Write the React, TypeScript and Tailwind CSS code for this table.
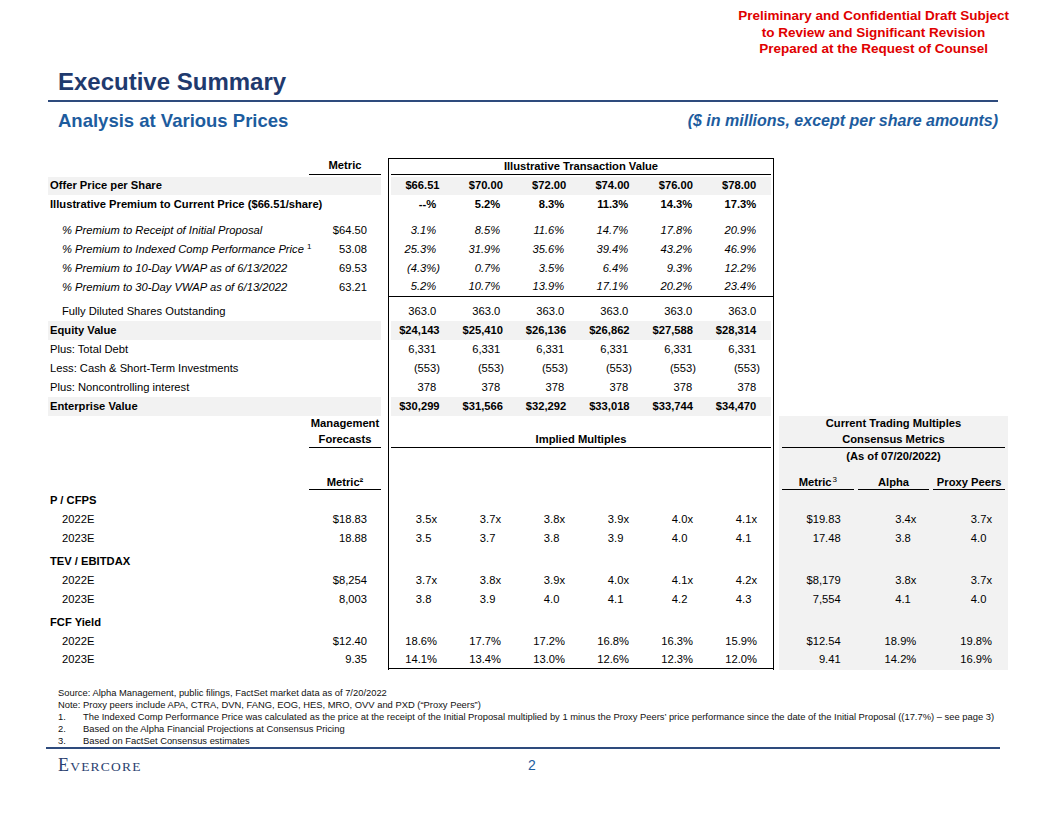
import React from "react";

type ShellProps = {
  h: string;
  band?: boolean;
  label?: React.ReactNode;
  labelCls?: string;
  metric?: React.ReactNode;
  metricCls?: string;
  box?: React.ReactNode;
  boxCls?: string;
  right?: React.ReactNode;
  grey?: boolean;
};

// one horizontal strip of the table: label | metric | boxed values | right panel
function Shell({ h, band, label, labelCls = "", metric, metricCls = "", box, boxCls = "", right, grey }: ShellProps) {
  const bg = band ? "bg-[#f2f2f2]" : "";
  return (
    <div className={`flex ${h}`}>
      <div className={`w-[261px] flex items-center whitespace-nowrap ${bg} ${labelCls}`}>{label}</div>
      <div className={`w-[72px] flex items-center ${bg} ${metricCls}`}>{metric}</div>
      <div className="w-[7px]" />
      <div className={`w-[386px] border-x border-black ${boxCls}`}>{box}</div>
      <div className="w-[5px]" />
      <div className={`w-[229px] px-[3px] ${grey ? "bg-[#f2f2f2]" : ""}`}>{right}</div>
    </div>
  );
}

// upper section values: keep room for a closing paren so "(553)" hangs right
const Paren = ({ v }: { v: string }) => (
  <>
    {v}
    {!v.endsWith(")") && <span className="invisible">)</span>}
  </>
);

// multiples without the "x" still line up with the ones that have it
const Mult = ({ v }: { v: string }) => (
  <>
    {v}
    {/^[0-9.]+$/.test(v) && <span className="invisible">x</span>}
  </>
);

function UpperVals({ vals, band, cls = "" }: { vals: string[]; band?: boolean; cls?: string }) {
  return (
    <div className={`h-full grid grid-cols-6 ${band ? "mx-[2px] bg-[#f2f2f2]" : ""} ${cls}`}>
      {vals.map((v, i) => (
        <div key={i} className={`flex items-center justify-end ${band ? "pr-[11px]" : "pr-[13px]"}`}>
          <Paren v={v} />
        </div>
      ))}
    </div>
  );
}

function LowerVals({ vals }: { vals: string[] }) {
  return (
    <div className="h-full grid grid-cols-6">
      {vals.map((v, i) => (
        <div key={i} className="flex items-center justify-end pr-[16px]">
          <Mult v={v} />
        </div>
      ))}
    </div>
  );
}

function RightVals({ vals }: { vals: string[] }) {
  return (
    <div className="h-full grid grid-cols-3 gap-x-[4px]">
      {vals.map((v, i) => (
        <div key={i} className="flex items-center justify-end pr-[13px]">
          {i === 0 ? v : <Mult v={v} />}
        </div>
      ))}
    </div>
  );
}

const premiums = [
  { label: "% Premium to Receipt of Initial Proposal", sup: false, metric: "$64.50", vals: ["3.1%", "8.5%", "11.6%", "14.7%", "17.8%", "20.9%"] },
  { label: "% Premium to Indexed Comp Performance Price", sup: true, metric: "53.08", vals: ["25.3%", "31.9%", "35.6%", "39.4%", "43.2%", "46.9%"] },
  { label: "% Premium to 10-Day VWAP as of 6/13/2022", sup: false, metric: "69.53", vals: ["(4.3%)", "0.7%", "3.5%", "6.4%", "9.3%", "12.2%"] },
  { label: "% Premium to 30-Day VWAP as of 6/13/2022", sup: false, metric: "63.21", vals: ["5.2%", "10.7%", "13.9%", "17.1%", "20.2%", "23.4%"] },
];

const bridge = [
  { label: "Fully Diluted Shares Outstanding", kind: "indent", vals: Array(6).fill("363.0") },
  { label: "Equity Value", kind: "bold", vals: ["$24,143", "$25,410", "$26,136", "$26,862", "$27,588", "$28,314"] },
  { label: "Plus: Total Debt", kind: "plain", vals: Array(6).fill("6,331") },
  { label: "Less: Cash & Short-Term Investments", kind: "plain", vals: Array(6).fill("(553)") },
  { label: "Plus: Noncontrolling interest", kind: "plain", vals: Array(6).fill("378") },
  { label: "Enterprise Value", kind: "bold", vals: ["$30,299", "$31,566", "$32,292", "$33,018", "$33,744", "$34,470"] },
];

const groups = [
  {
    title: "P / CFPS",
    rows: [
      { year: "2022E", metric: "$18.83", vals: ["3.5x", "3.7x", "3.8x", "3.9x", "4.0x", "4.1x"], right: ["$19.83", "3.4x", "3.7x"] },
      { year: "2023E", metric: "18.88", vals: ["3.5", "3.7", "3.8", "3.9", "4.0", "4.1"], right: ["17.48", "3.8", "4.0"] },
    ],
  },
  {
    title: "TEV / EBITDAX",
    rows: [
      { year: "2022E", metric: "$8,254", vals: ["3.7x", "3.8x", "3.9x", "4.0x", "4.1x", "4.2x"], right: ["$8,179", "3.8x", "3.7x"] },
      { year: "2023E", metric: "8,003", vals: ["3.8", "3.9", "4.0", "4.1", "4.2", "4.3"], right: ["7,554", "4.1", "4.0"] },
    ],
  },
  {
    title: "FCF Yield",
    rows: [
      { year: "2022E", metric: "$12.40", vals: ["18.6%", "17.7%", "17.2%", "16.8%", "16.3%", "15.9%"], right: ["$12.54", "18.9%", "19.8%"] },
      { year: "2023E", metric: "9.35", vals: ["14.1%", "13.4%", "13.0%", "12.6%", "12.3%", "12.0%"], right: ["9.41", "14.2%", "16.9%"] },
    ],
  },
];

const notes = [
  "The Indexed Comp Performance Price was calculated as the price at the receipt of the Initial Proposal multiplied by 1 minus the Proxy Peers\u2019 price performance since the date of the Initial Proposal ((17.7%) \u2013 see page 3)",
  "Based on the Alpha Financial Projections at Consensus Pricing",
  "Based on FactSet Consensus estimates",
];

export default function App() {
  return (
    <div className="w-[1056px] h-[816px] bg-white overflow-hidden font-['Liberation_Sans',Arial,sans-serif] text-black">
      {/* draft stamp */}
      <div className="flex justify-end pr-[47px] pt-[8px]">
        <div className="text-center text-[13.5px] leading-[16.5px] font-bold text-[#e00000]">
          <div>Preliminary and Confidential Draft Subject</div>
          <div>to Review and Significant Revision</div>
          <div>Prepared at the Request of Counsel</div>
        </div>
      </div>

      <h1 className="mt-[10px] pl-[58px] text-[24px] leading-[28px] font-bold text-[#1f3a6e]">Executive Summary</h1>
      <div className="mt-[4px] ml-[48px] w-[950px] h-[2px] bg-[#2e4b7d]" />

      <div className="mt-[8px] flex items-center justify-between pl-[58px] pr-[58px] h-[22px]">
        <div className="text-[18.5px] font-bold text-[#1d5c9e]">Analysis at Various Prices</div>
        <div className="text-[16px] font-bold italic text-[#1d5c9e]">($ in millions, except per share amounts)</div>
      </div>

      {/* table */}
      <div className="mt-[26px] pl-[48px] text-[11.2px] leading-[13px]">
        <Shell
          h="h-[17px]"
          metric={<div className="w-full h-full flex items-center justify-center font-bold border-b border-black">Metric</div>}
          boxCls="border-t"
          box={
            <div className="mx-[2px] h-full flex items-center justify-center font-bold border-b border-black">
              Illustrative Transaction Value
            </div>
          }
        />
        <Shell h="h-[2px]" />
        <Shell
          h="h-[18px]"
          band
          label="Offer Price per Share"
          labelCls="pl-[2px] font-bold"
          box={<UpperVals band cls="font-bold" vals={["$66.51", "$70.00", "$72.00", "$74.00", "$76.00", "$78.00"]} />}
        />
        <Shell
          h="h-[20px]"
          label="Illustrative Premium to Current Price ($66.51/share)"
          labelCls="pl-[2px] font-bold"
          box={<UpperVals cls="font-bold" vals={["--%", "5.2%", "8.3%", "11.3%", "14.3%", "17.3%"]} />}
        />
        <Shell h="h-[6px]" />
        {premiums.map((p, i) => (
          <Shell
            key={p.label}
            h="h-[19px]"
            label={
              <span className="italic">
                {p.label}
                {p.sup && <sup className="not-italic text-[8px] ml-[3px]">1</sup>}
              </span>
            }
            labelCls="pl-[14px]"
            metric={<div className="w-full text-right pr-[14px]">{p.metric}</div>}
            boxCls={i === premiums.length - 1 ? "border-b" : ""}
            box={<UpperVals cls="italic" vals={p.vals} />}
          />
        ))}
        <Shell h="h-[5px]" />
        {bridge.map((r) => (
          <Shell
            key={r.label}
            h="h-[19px]"
            band={r.kind === "bold"}
            label={r.label}
            labelCls={r.kind === "bold" ? "pl-[2px] font-bold" : r.kind === "indent" ? "pl-[14px]" : "pl-[2px]"}
            box={<UpperVals band={r.kind === "bold"} cls={r.kind === "bold" ? "font-bold" : ""} vals={r.vals} />}
          />
        ))}

        {/* lower headers */}
        <Shell
          h="h-[16px]"
          grey
          metric={<div className="w-full text-center font-bold">Management</div>}
          right={<div className="h-full flex items-center justify-center font-bold">Current Trading Multiples</div>}
        />
        <Shell
          h="h-[16px]"
          grey
          metric={<div className="w-full h-full flex items-center justify-center font-bold border-b border-black">Forecasts</div>}
          box={
            <div className="mx-[2px] h-full flex items-center justify-center font-bold border-b border-black">
              Implied Multiples
            </div>
          }
          right={
            <div className="h-full flex items-center justify-center font-bold border-b border-black">Consensus Metrics</div>
          }
        />
        <Shell
          h="h-[18px]"
          grey
          right={<div className="h-full flex items-center justify-center font-bold">(As of 07/20/2022)</div>}
        />
        <Shell h="h-[10px]" grey />
        <Shell
          h="h-[14px]"
          grey
          metric={<div className="w-full h-full flex items-end justify-center font-bold border-b border-black">Metric²</div>}
          right={
            <div className="h-full grid grid-cols-3 gap-x-[4px] font-bold">
              <div className="flex items-end justify-center border-b border-black">
                <span>
                  Metric<sup className="font-normal text-[8px] ml-[1px]">3</sup>
                </span>
              </div>
              <div className="flex items-end justify-center border-b border-black">Alpha</div>
              <div className="flex items-end justify-center border-b border-black">Proxy Peers</div>
            </div>
          }
        />
        <Shell h="h-[2px]" grey />
        {groups.map((g, gi) => (
          <React.Fragment key={g.title}>
            {gi > 0 && <Shell h="h-[5px]" grey />}
            <Shell h="h-[18px]" grey label={g.title} labelCls="pl-[2px] font-bold" />
            {g.rows.map((r, ri) => {
              const last = gi === groups.length - 1 && ri === g.rows.length - 1;
              return (
                <Shell
                  key={r.year}
                  h={last ? "h-[18px]" : "h-[19px]"}
                  grey
                  label={r.year}
                  labelCls="pl-[14px]"
                  metric={<div className="w-full text-right pr-[14px]">{r.metric}</div>}
                  boxCls={last ? "border-b" : ""}
                  box={<LowerVals vals={r.vals} />}
                  right={<RightVals vals={r.right} />}
                />
              );
            })}
          </React.Fragment>
        ))}
        <Shell h="h-[1px]" grey />
      </div>

      {/* footnotes */}
      <div className="mt-[17px] pl-[58px] text-[9.4px] leading-[12px] text-[#111]">
        <div>Source: Alpha Management, public filings, FactSet market data as of 7/20/2022</div>
        <div>Note: Proxy peers include APA, CTRA, DVN, FANG, EOG, HES, MRO, OVV and PXD (&ldquo;Proxy Peers&rdquo;)</div>
        {notes.map((n, i) => (
          <div key={i} className="flex">
            <span className="w-[25px]">{i + 1}.</span>
            <span className="whitespace-nowrap">{n}</span>
          </div>
        ))}
      </div>
      <div className="ml-[46px] w-[954px] h-[2px] bg-[#2e4b7d]" />

      <div className="mt-[8px] pl-[58px] flex items-center h-[18px]">
        <div className="w-[84px] flex items-baseline font-['Liberation_Serif',serif] text-[#2b4270] tracking-[1.2px]">
          <span className="text-[18px] leading-[18px]">E</span>
          <span className="text-[13.5px] leading-[18px]">VERCORE</span>
        </div>
        <div className="ml-[386px] text-[14px] text-[#1d5c9e]">2</div>
      </div>
    </div>
  );
}
